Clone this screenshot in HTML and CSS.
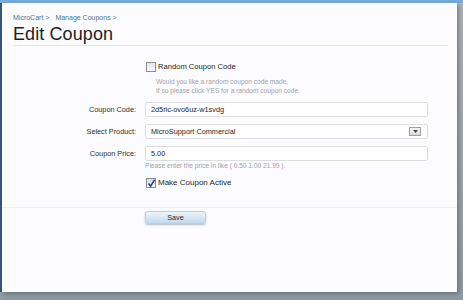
FILE: index.html
```html
<!DOCTYPE html>
<html>
<head>
<meta charset="utf-8">
<link rel="stylesheet" href="styles.css">
</head>
<body>
<div class="topbar"></div>
<div class="frame">
  <div class="panel">
    <div class="head">
      <div class="crumbs"><a>MicroCart &gt;</a><a>Manage Coupons &gt;</a></div>
      <h1 class="title">Edit Coupon</h1>
    </div>
    <div class="form">
      <div class="checkrow random">
        <span class="cb"></span>
        <div class="checktext">
          <div class="cblabel">Random Coupon Code</div>
          <div class="help">Would you like a random coupon code made,<br>If so please click YES for a random coupon code.</div>
        </div>
      </div>
      <div class="grid">
        <label class="lbl">Coupon Code:</label>
        <div class="field">2d5ric-ovo6uz-w1svdg</div>
        <label class="lbl">Select Product:</label>
        <div class="field select">MicroSupport Commercial<span class="dd"><svg width="5" height="3" viewBox="0 0 5 3"><path d="M0 0h5L2.5 3z" fill="#444"/></svg></span></div>
        <label class="lbl">Coupon Price:</label>
        <div class="field">5.00</div>
        <div></div>
        <div class="pricehelp">Please enter the price in like ( 0.50 1.00 21.99 ).</div>
      </div>
      <div class="checkrow active">
        <span class="cb checked"><svg width="9" height="9" viewBox="0 0 9 9"><path d="M1.5 4.5 L3.6 7.2 L7.6 0.8" fill="none" stroke="#2b3f8a" stroke-width="1.6"/></svg></span>
        <div class="cblabel strong">Make Coupon Active</div>
      </div>
    </div>
    <div class="actions">
      <button class="save">Save</button>
    </div>
  </div>
</div>
</body>
</html>
```
FILE: styles.css
```css
* { box-sizing: border-box; }
html, body { margin: 0; padding: 0; }
body {
  width: 463px;
  height: 300px;
  overflow: hidden;
  background: linear-gradient(#a9b3b8, #8e9aa2);
  font-family: "Liberation Sans", Arial, sans-serif;
}
.topbar {
  height: 3px;
  background: #78aade;
}
.frame {
  height: 289px;
  border-left: 2px solid #33567a;
  display: flex;
}
.panel {
  width: 455px;
  height: 289px;
  background: #fcfcfe;
  box-shadow: 2px 2px 4px rgba(60, 70, 80, 0.45);
  display: flex;
  flex-direction: column;
}
.head {
  margin: 0 9px 0 11px;
  border-bottom: 1px solid #e6e8ec;
  height: 43px;
}
.crumbs {
  padding-top: 10px;
  font-size: 7px;
  line-height: 10px;
  color: #4d7391;
  display: flex;
  gap: 6px;
}
.title {
  margin: 0;
  font-weight: normal;
  font-size: 18px;
  line-height: 22px;
  color: #1e1e1e;
  letter-spacing: 0.1px;
}
.form {
  padding-top: 16px;
}
.checkrow {
  display: flex;
  align-items: flex-start;
  margin-left: 144px;
  gap: 2px;
}
.cb {
  width: 10px;
  height: 10px;
  border: 1px solid #8a8f96;
  background: linear-gradient(#e2e4e8, #f8f9fb);
  display: flex;
  align-items: center;
  justify-content: center;
  flex: none;
}
.cb.checked { background: linear-gradient(#d8dce6, #f2f4f8); }
.cb svg { flex: none; }
.cblabel {
  font-size: 7.6px;
  line-height: 10px;
  color: #262626;
}
.strong { font-size: 8px; color: #1f1f1f; }
.help {
  margin-left: -2px;
  margin-top: 5px;
  font-size: 6.6px;
  line-height: 9px;
  color: #a0a3a7;
}
.grid {
  margin-top: 7px;
  display: grid;
  grid-template-columns: 143px 283px;
  row-gap: 7px;
  align-items: center;
}
.lbl {
  text-align: right;
  padding-right: 9px;
  font-size: 7.3px;
  color: #2e2e2e;
}
.field {
  height: 15px;
  border: 1px solid #dcdee2;
  border-radius: 2px;
  background: #fff;
  font-size: 7.3px;
  line-height: 13px;
  padding-left: 5px;
  color: #262626;
  display: flex;
  align-items: center;
  justify-content: space-between;
}
.select { padding-right: 6px; }
.dd {
  width: 12px;
  height: 9px;
  border: 1px solid #9aa0a6;
  background: linear-gradient(#f6f6f6, #dcdcdc);
  display: flex;
  align-items: center;
  justify-content: center;
}
.pricehelp {
  margin-top: -6px;
  font-size: 6.6px;
  color: #a0a3a7;
  height: 8px;
  line-height: 8px;
}
.active {
  margin-top: 8px;
  align-items: center;
}
.actions {
  margin-top: 19px;
  border-top: 1px solid #eff0f3;
  padding: 3px 0 0 143px;
  display: flex;
}
.save {
  width: 61px;
  height: 13px;
  margin: 0;
  border: 1px solid #b9cfe2;
  border-radius: 3px;
  background: linear-gradient(#eef5fb, #c2d9ec);
  box-shadow: 0 1px 2px rgba(40, 60, 90, 0.35);
  font-family: "Liberation Sans", Arial, sans-serif;
  font-size: 7.3px;
  line-height: 11px;
  color: #2a2a2a;
  padding: 0;
}
```
